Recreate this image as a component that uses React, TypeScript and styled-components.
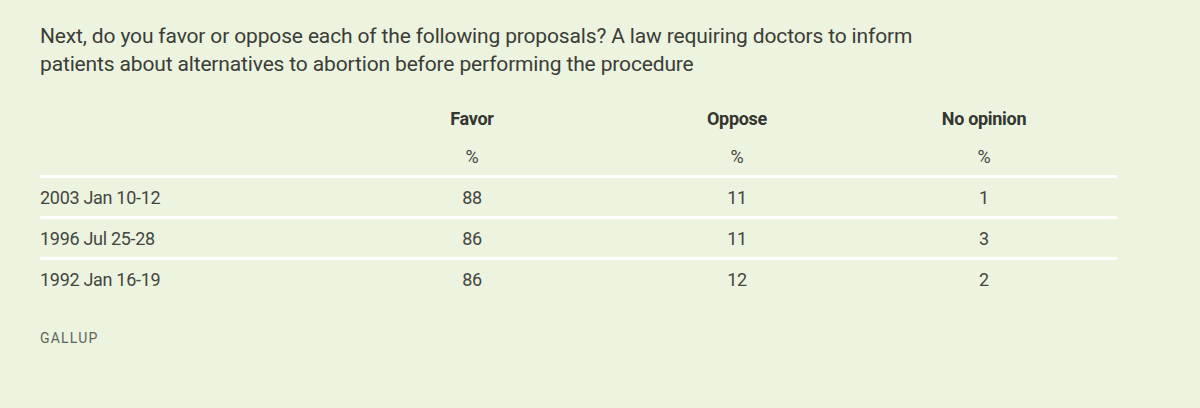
import React from "react";
import styled, { createGlobalStyle } from "styled-components";

const Global = createGlobalStyle`
  html, body { margin: 0; padding: 0; background: #ecf3df; }
  body { font-family: Roboto, "Liberation Sans", Arial, sans-serif; }
`;

const Page = styled.div`
  width: 1200px;
  height: 408px;
  box-sizing: border-box;
  padding: 22px 83px 0 40px;
  background: #ecf3df;
  color: #3a3c36;
`;

const Title = styled.p`
  margin: 0;
  font-size: 21px;
  line-height: 28px;
  letter-spacing: -0.15px;
  color: #3b3d37;
`;

const Table = styled.div`
  margin-top: 21px;
  display: grid;
  grid-template-columns: 281px 302px 228px 266px;
`;

const Row = styled.div<{ $lined?: boolean }>`
  display: contents;
  & > * {
    height: 38px;
    border-top: ${(p) => (p.$lined ? "3px solid #ffffff" : "none")};
  }
`;

const Cell = styled.div<{ $align?: "left" | "center"; $bold?: boolean }>`
  display: flex;
  align-items: center;
  justify-content: ${(p) => (p.$align === "left" ? "flex-start" : "center")};
  font-size: 18px;
  font-weight: ${(p) => (p.$bold ? 700 : 400)};
  color: ${(p) => (p.$bold ? "#34362f" : "#44463f")};
  letter-spacing: -0.3px;
`;

const Source = styled.div`
  margin-top: 30px;
  font-size: 14px;
  line-height: 20px;
  letter-spacing: 1.2px;
  color: #60655a;
`;

const rows = [
  ["2003 Jan 10-12", "88", "11", "1"],
  ["1996 Jul 25-28", "86", "11", "3"],
  ["1992 Jan 16-19", "86", "12", "2"],
];

export default function App() {
  return (
    <>
      <Global />
      <Page>
        <Title>
          Next, do you favor or oppose each of the following proposals? A law requiring doctors to inform
          <br />
          patients about alternatives to abortion before performing the procedure
        </Title>
        <Table>
          <Row>
            <Cell $align="left" />
            <Cell $bold>Favor</Cell>
            <Cell $bold>Oppose</Cell>
            <Cell $bold>No opinion</Cell>
          </Row>
          <Row>
            <Cell $align="left" />
            <Cell>%</Cell>
            <Cell>%</Cell>
            <Cell>%</Cell>
          </Row>
          {rows.map((r) => (
            <Row key={r[0]} $lined>
              <Cell $align="left">{r[0]}</Cell>
              <Cell>{r[1]}</Cell>
              <Cell>{r[2]}</Cell>
              <Cell>{r[3]}</Cell>
            </Row>
          ))}
        </Table>
        <Source>GALLUP</Source>
      </Page>
    </>
  );
}
